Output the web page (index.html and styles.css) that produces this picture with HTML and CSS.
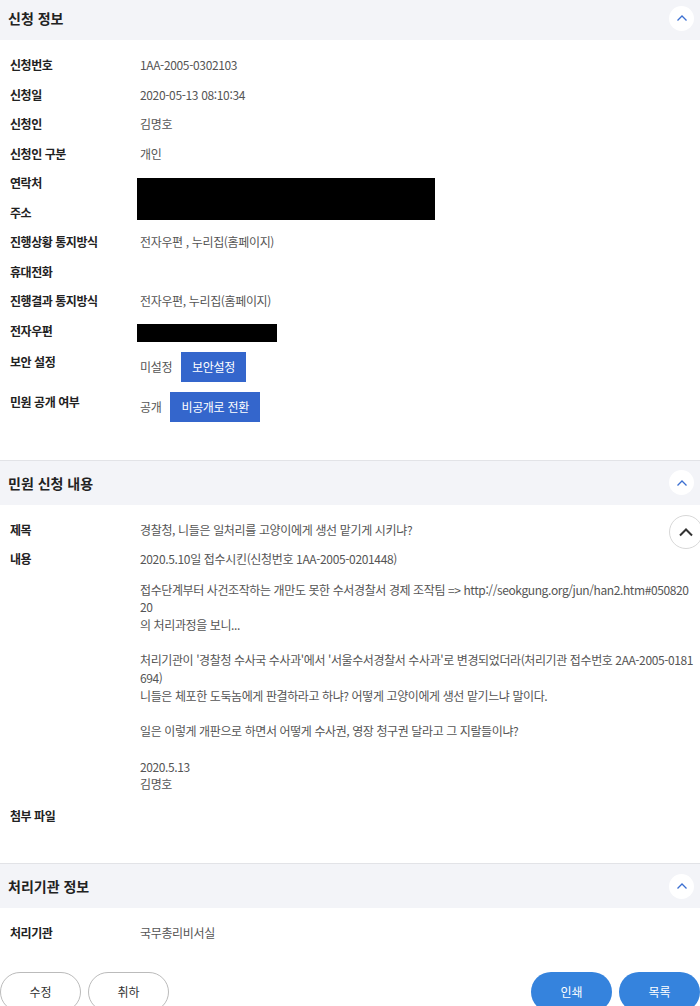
FILE: index.html
```html
<!DOCTYPE html>
<html lang="ko">
<head>
    <meta charset="UTF-8">
    <meta name="viewport" content="width=device-width, initial-scale=1.0">
    <title>민원 신청 상세</title>
    <link rel="stylesheet" href="styles.css">
</head>
<body>

<div class="page">

    <!-- 신청 정보 -->
    <section class="section">
        <div class="section-head">
            <h2>신청 정보</h2>
            <button class="fold-btn" aria-label="접기">
                <svg width="12" height="8" viewBox="0 0 12 8"><path d="M1.5 6.5 L6 2 L10.5 6.5" fill="none" stroke="#3b6fd1" stroke-width="1.3"/></svg>
            </button>
        </div>
        <div class="section-body">
            <div class="row"><div class="label">신청번호</div><div class="value">1AA-2005-0302103</div></div>
            <div class="row"><div class="label">신청일</div><div class="value">2020-05-13 08:10:34</div></div>
            <div class="row"><div class="label">신청인</div><div class="value">김명호</div></div>
            <div class="row"><div class="label">신청인 구분</div><div class="value">개인</div></div>
            <div class="row"><div class="label">연락처</div><div class="value redact-holder"><span class="redact redact-big"></span></div></div>
            <div class="row"><div class="label">주소</div><div class="value"></div></div>
            <div class="row"><div class="label">진행상황 통지방식</div><div class="value">전자우편 , 누리집(홈페이지)</div></div>
            <div class="row"><div class="label">휴대전화</div><div class="value"></div></div>
            <div class="row"><div class="label">진행결과 통지방식</div><div class="value">전자우편, 누리집(홈페이지)</div></div>
            <div class="row"><div class="label">전자우편</div><div class="value"><span class="redact redact-mail"></span></div></div>
            <div class="row row-btn"><div class="label">보안 설정</div><div class="value">미설정 <button class="blue-btn">보안설정</button></div></div>
            <div class="row row-btn"><div class="label">민원 공개 여부</div><div class="value">공개 <button class="blue-btn">비공개로 전환</button></div></div>
        </div>
    </section>

    <!-- 민원 신청 내용 -->
    <section class="section">
        <div class="section-head">
            <h2>민원 신청 내용</h2>
            <button class="fold-btn" aria-label="접기">
                <svg width="12" height="8" viewBox="0 0 12 8"><path d="M1.5 6.5 L6 2 L10.5 6.5" fill="none" stroke="#3b6fd1" stroke-width="1.3"/></svg>
            </button>
        </div>
        <div class="section-body content-body">
            <div class="row"><div class="label">제목</div><div class="value">경찰청, 니들은 일처리를 고양이에게 생선 맡기게 시키냐?</div></div>
            <div class="row">
                <div class="label">내용</div>
                <div class="value">
                    <div>2020.5.10일 접수시킨(신청번호 1AA-2005-0201448)</div>
                    <div class="content-text">접수단계부터 사건조작하는 개만도 못한 수서경찰서 경제 조작팀 =&gt; http://seokgung.org/jun/han2.htm#05082020
의 처리과정을 보니...

처리기관이 '경찰청 수사국 수사과'에서 '서울수서경찰서 수사과'로 변경되었더라(처리기관 접수번호 2AA-2005-0181694)
니들은 체포한 도둑놈에게 판결하라고 하냐? 어떻게 고양이에게 생선 맡기느냐 말이다.

일은 이렇게 개판으로 하면서 어떻게 수사권, 영장 청구권 달라고 그 지랄들이냐?

2020.5.13
김명호</div>
                </div>
            </div>
            <div class="row attach-row"><div class="label">첨부 파일</div><div class="value"></div></div>
        </div>
    </section>

    <!-- 처리기관 정보 -->
    <section class="section">
        <div class="section-head">
            <h2>처리기관 정보</h2>
            <button class="fold-btn" aria-label="접기">
                <svg width="12" height="8" viewBox="0 0 12 8"><path d="M1.5 6.5 L6 2 L10.5 6.5" fill="none" stroke="#3b6fd1" stroke-width="1.3"/></svg>
            </button>
        </div>
        <div class="section-body last">
            <div class="row"><div class="label">처리기관</div><div class="value">국무총리비서실</div></div>
        </div>
    </section>

    <div class="actions">
        <div class="btn-group">
            <button class="pill-btn">수정</button>
            <button class="pill-btn">취하</button>
        </div>
        <div class="btn-group">
            <button class="pill-btn primary">인쇄</button>
            <button class="pill-btn primary">목록</button>
        </div>
    </div>

    <!-- 맨 위로 -->
    <button class="top-btn" aria-label="맨 위로">
        <svg width="16" height="10" viewBox="0 0 16 10"><path d="M2 8.5 L8 2.5 L14 8.5" fill="none" stroke="#333" stroke-width="2"/></svg>
    </button>

</div>

</body>
</html>
```

FILE: styles.css
```css
body {
    margin: 0;
    padding: 0;
    font-family: "Noto Sans CJK KR", "Noto Sans", sans-serif;
    font-size: 12px;
    color: #222;
    background: #fff;
}

.page {
    position: relative;
    margin-top: -4px;
}

.section {
    border-top: 1px solid #e2e3e7;
}

.section:first-child {
    border-top: none;
}

.section-head {
    display: flex;
    align-items: center;
    justify-content: space-between;
    height: 44px;
    padding: 0 6px 0 8px;
    background-color: #f3f4f8;
}

.section-head h2 {
    margin: 0;
    font-size: 14px;
    font-weight: 700;
    color: #222;
}

.fold-btn {
    display: flex;
    align-items: center;
    justify-content: center;
    width: 25px;
    height: 25px;
    padding: 0;
    border: none;
    border-radius: 50%;
    background-color: #fff;
}

.section-body {
    display: flex;
    flex-direction: column;
    gap: 10px;
    padding: 15px 10px 38px 10px;
}

.section-body.content-body {
    padding-bottom: 38px;
}

.section-body.last {
    padding: 15px 10px 29px 10px;
}

.row {
    display: flex;
    align-items: flex-start;
    line-height: 19.5px;
}

.attach-row {
    margin-top: 3px;
}

.label {
    flex: 0 0 130px;
    font-weight: 700;
    color: #222;
    letter-spacing: -0.45px;
}

.value {
    flex: 1;
    color: #555;
    letter-spacing: -0.35px;
    word-break: break-all;
}

.row-btn .value {
    display: flex;
    align-items: center;
    gap: 9px;
}

.redact-holder {
    position: relative;
}

.redact {
    display: block;
    background-color: #000;
}

.redact-big {
    position: absolute;
    left: -3px;
    top: 5px;
    width: 298px;
    height: 42px;
}

.redact-mail {
    width: 140px;
    height: 18px;
    margin-left: -3px;
    margin-top: 3px;
}

.blue-btn {
    height: 30px;
    padding: 0 11px;
    border: none;
    background-color: #3466cc;
    color: #fff;
    font-family: inherit;
    font-size: 12px;
    letter-spacing: -0.3px;
}

.content-text {
    margin-top: 12px;
    margin-right: -4px;
    line-height: 17.7px;
    letter-spacing: -0.4px;
    white-space: pre-wrap;
}

.actions {
    display: flex;
    justify-content: space-between;
}

.btn-group {
    display: flex;
    gap: 7px;
}

.pill-btn {
    width: 81px;
    height: 40px;
    border: 1px solid #bbb;
    border-radius: 20px;
    background-color: #fff;
    color: #333;
    font-family: inherit;
    font-size: 12px;
}

.pill-btn.primary {
    border: none;
    background-color: #3583dd;
    color: #fff;
}

/* floating scroll button */
.top-btn {
    position: absolute;
    top: 519px;
    right: -3px;
    display: flex;
    align-items: center;
    justify-content: center;
    width: 34px;
    height: 34px;
    padding: 0;
    border: 1px solid #d8d8d8;
    border-radius: 50%;
    background-color: #fff;
}
```
